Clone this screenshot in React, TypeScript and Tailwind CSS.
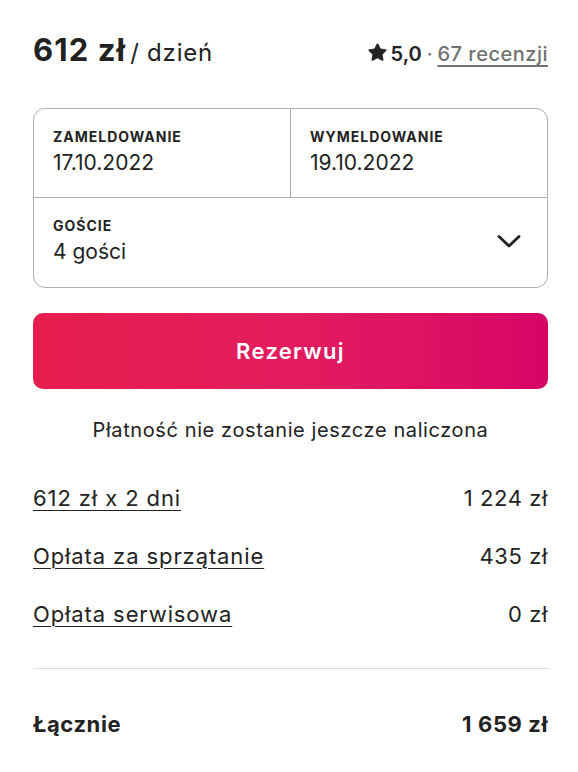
import { Star } from 'lucide-react'

const rows = [
  { label: '612 zł x 2 dni', value: '1 224 zł' },
  { label: 'Opłata za sprzątanie', value: '435 zł' },
  { label: 'Opłata serwisowa', value: '0 zł' },
]

export default function App() {
  return (
    <div
      className="min-h-[772px] bg-white pl-[33px] pr-[30px] pt-[30px] text-[#222222]"
      style={{ fontFamily: 'Inter, "Noto Sans", sans-serif' }}
    >
      <div className="flex h-[40px] items-baseline justify-between">
        <div className="flex items-baseline">
          <span className="text-[31px] font-bold leading-[40px] tracking-[1.1px]">612 zł</span>
          <span className="ml-[4px] text-[24px] font-normal tracking-[0.8px]">/ dzień</span>
        </div>
        <div className="flex items-baseline text-[20px]">
          <Star className="mr-[3px] h-[21px] w-[21px] translate-y-[-2px] self-center fill-[#222222]" strokeWidth={1} />
          <span className="font-semibold">5,0</span>
          <span className="mx-[5px] text-[#717171]">·</span>
          <span className="font-medium tracking-[0.5px] text-[#717171] underline decoration-[1.5px] underline-offset-[4px]">
            67 recenzji
          </span>
        </div>
      </div>

      <div className="mt-[38px] h-[180px] overflow-hidden rounded-[12px] border border-[#b0b0b0]">
        <div className="flex h-[89px] border-b border-[#b0b0b0]">
          <div className="w-[257px] border-r border-[#b0b0b0] px-[19px] pt-[18px]">
            <div className="text-[14px] font-bold leading-[20px] tracking-[1px]">ZAMELDOWANIE</div>
            <div className="mt-[2px] text-[21px] leading-[28px]">17.10.2022</div>
          </div>
          <div className="flex-1 px-[19px] pt-[18px]">
            <div className="text-[14px] font-bold leading-[20px] tracking-[1px]">WYMELDOWANIE</div>
            <div className="mt-[2px] text-[21px] leading-[28px]">19.10.2022</div>
          </div>
        </div>
        <div className="flex items-center justify-between pl-[19px] pr-[26px] pt-[18px]">
          <div>
            <div className="text-[14px] font-bold leading-[20px] tracking-[1px]">GOŚCIE</div>
            <div className="mt-[2px] text-[21px] leading-[28px]">4 gości</div>
          </div>
          <svg width="24" height="15" viewBox="0 0 24 15" fill="none">
            <polyline
              points="2,2.5 12,12 22,2.5"
              stroke="#222222"
              strokeWidth="2.8"
              strokeLinecap="round"
              strokeLinejoin="round"
            />
          </svg>
        </div>
      </div>

      <button className="mt-[25px] flex h-[76px] w-full items-center justify-center rounded-[10px] bg-gradient-to-r from-[#e61e4d] via-[#e31c5f] to-[#d70466] text-[22px] font-semibold tracking-[1.3px] text-white">
        Rezerwuj
      </button>

      <p className="mt-[29px] text-center text-[20px] leading-[24px] tracking-[0.6px]">
        Płatność nie zostanie jeszcze naliczona
      </p>

      <div className="mt-[42px] flex flex-col gap-[30px]">
        {rows.map((row) => (
          <div
            key={row.label}
            className="flex h-[28px] items-center justify-between text-[22px] tracking-[0.6px]"
          >
            <span className="tracking-[0.9px] underline decoration-1 underline-offset-[4px]">{row.label}</span>
            <span>{row.value}</span>
          </div>
        ))}
      </div>

      <div className="mt-[40px] h-px bg-[#dddddd]" />

      <div className="mt-[41px] flex h-[28px] items-center justify-between text-[22px] font-bold tracking-[0.6px]">
        <span>Łącznie</span>
        <span>1 659 zł</span>
      </div>
    </div>
  )
}
